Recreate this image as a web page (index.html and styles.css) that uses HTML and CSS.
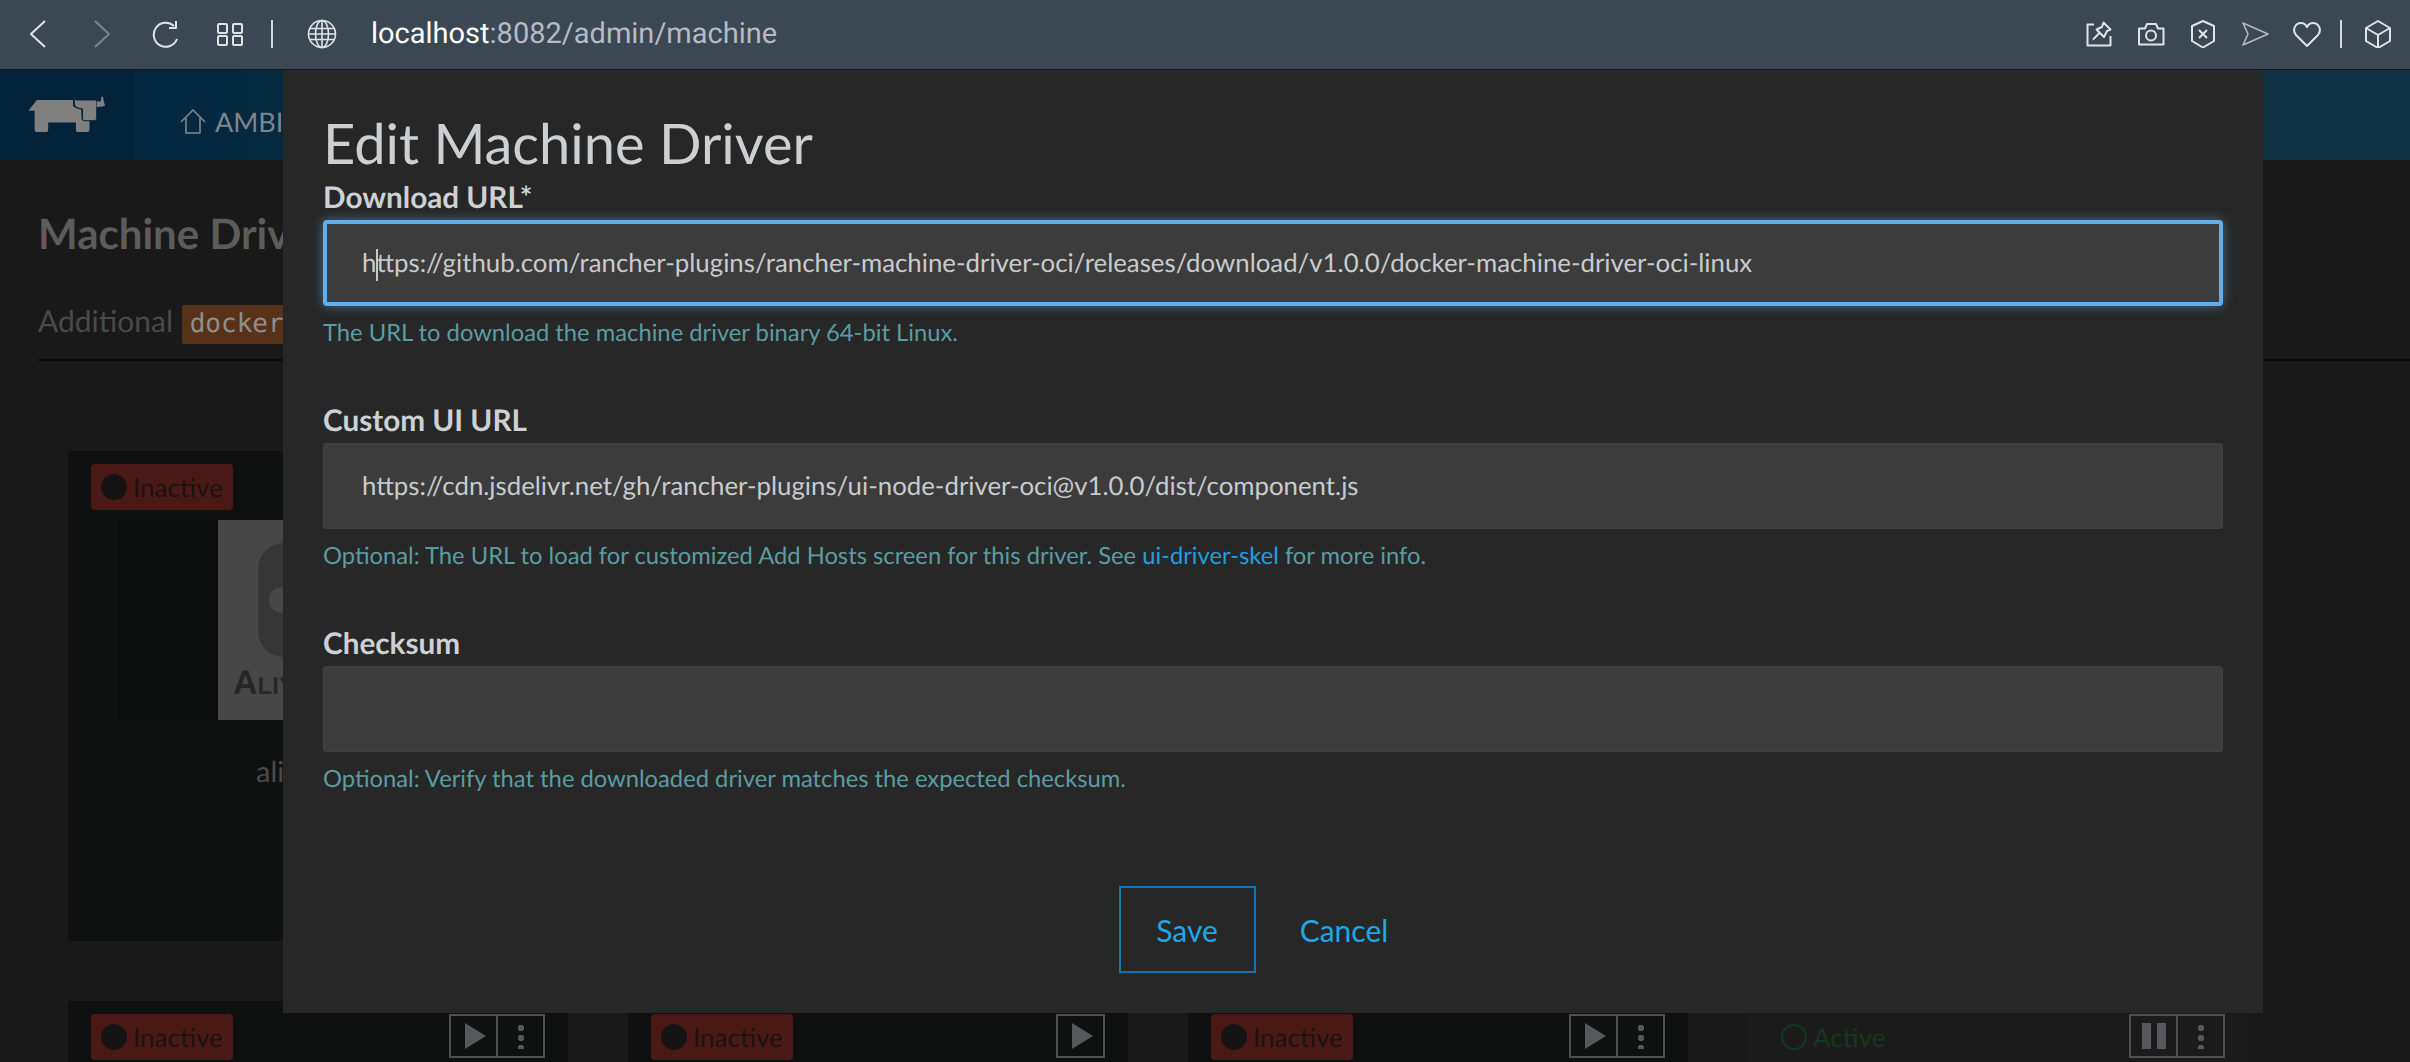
FILE: index.html
```html
<!DOCTYPE html>
<html lang="en">
<head>
    <meta charset="UTF-8">
    <title>Edit Machine Driver</title>
    <link rel="stylesheet" href="styles.css">
</head>
<body>
    <div class="browser-bar">
        <div class="bar-left">
            <svg class="icon" viewBox="0 0 28 28"><path d="M21 1 L7 14 L21 27"/></svg>
            <svg class="icon icon-off" viewBox="0 0 28 28"><path d="M7 1 L21 14 L7 27"/></svg>
            <svg class="icon" viewBox="0 0 28 28"><path d="M25 19 A12 12 0 1 1 22 6"/><path d="M24 1 V8 H17"/></svg>
            <svg class="icon" viewBox="0 0 28 28"><rect x="2" y="4" width="9" height="9" rx="1"/><rect x="17" y="4" width="9" height="9" rx="1"/><rect x="2" y="16" width="9" height="9" rx="1"/><rect x="17" y="16" width="9" height="9" rx="1"/></svg>
        </div>
        <span class="bar-divider"></span>
        <svg class="icon globe" viewBox="0 0 30 30"><circle cx="15" cy="15" r="13.5"/><ellipse cx="15" cy="15" rx="6.5" ry="13.5"/><path d="M3 9.5 H27 M3 20.5 H27 M1.5 15 H28.5 M15 1.5 V28.5"/></svg>
        <div class="url"><span class="url-host">localhost</span>:8082/admin/machine</div>
        <div class="bar-right">
            <svg class="icon" viewBox="0 0 28 28"><path d="M9 4.5 H2.5 V25.5 H25.5 V16"/><path d="M18.5 2.5 L25.5 9.5 L22 11 L19 17 L11.5 9.5 L17 7 Z"/><path d="M14.5 13 L8 19.5"/></svg>
            <svg class="icon" viewBox="0 0 28 28"><path d="M2 8.5 H8 L10 4 H19 L21 8.5 H26.5 V24.5 H2 Z"/><circle cx="14" cy="15.5" r="5"/></svg>
            <svg class="icon" viewBox="0 0 28 28"><path d="M14 1 L25 6 V21 L14 27.5 L3 21 V6 Z"/><path d="M10 10 L18 18 M18 10 L10 18"/></svg>
            <svg class="icon icon-dim" viewBox="0 0 28 28"><path d="M2 3 L27 14 L2 25 L7 14 Z"/></svg>
            <svg class="icon" viewBox="0 0 28 28"><path d="M14 26 L3 15 C-1 10 2 3 8 3 C11 3 13 5 14 7 C15 5 17 3 20 3 C26 3 29 10 25 15 Z"/></svg>
            <span class="bar-divider bar-divider-right"></span>
            <svg class="icon" viewBox="0 0 28 28"><path d="M14 1 L26 8 V21 L14 28 L2 21 V8 Z"/><path d="M2 8 L14 15 L26 8 M14 15 V28"/></svg>
        </div>
    </div>

    <div class="page">
        <div class="top-nav">
            <div class="logo-box">
                <svg class="logo" viewBox="80 80 240 115">
                    <path d="M83 128 L103 103 Q105 95 112 95 L218 95 L218 112 Q220 120 243 124 L244 150 Q244 156 250 158 L268 158 L268 185 Q268 192 260 192 L235 192 Q227 192 227 185 L227 163 L143 163 L143 185 Q143 192 135 192 L110 192 Q102 192 102 185 L102 128 Z"/>
                    <path class="logo-head" d="M222 82 L226 95 L288 95 Q290 95 290 100 L290 150 Q290 158 282 158 L252 158 Q247 158 247 152 L247 122 Q222 120 222 104 Z"/>
                    <path d="M290 100 L298 100 Q304 100 304 85 L309 85 Q310 95 315 112 Q312 116 290 116 Z"/>
                </svg>
            </div>
            <div class="nav-item">
                <svg class="home" viewBox="0 0 26 25"><path d="M1 13 L13 1 L25 13 M6 9 V24 H20 V9"/></svg>
                <span>AMBI</span>
            </div>
        </div>

        <div class="content">
            <h2>Machine Driv</h2>
            <p class="intro">Additional <code>docker</code></p>
            <div class="cards">
                <div class="card">
                    <span class="badge"><i class="dot"></i>Inactive</span>
                    <div class="card-img">
                        <div class="ali-logo">
                            <div class="ali-shape"><i></i></div>
                            <b>Aliy</b>
                        </div>
                    </div>
                    <div class="card-name">ali</div>
                </div>
                <div class="card"></div>
                <div class="card"></div>
                <div class="card"></div>

                <div class="card card-row">
                    <span class="badge"><i class="dot"></i>Inactive</span>
                    <div class="actions">
                        <span class="act"><i class="play"></i></span>
                        <span class="act"><i class="dots"></i></span>
                    </div>
                </div>
                <div class="card card-row">
                    <span class="badge"><i class="dot"></i>Inactive</span>
                    <div class="actions">
                        <span class="act"><i class="play"></i></span>
                    </div>
                </div>
                <div class="card card-row">
                    <span class="badge"><i class="dot"></i>Inactive</span>
                    <div class="actions">
                        <span class="act"><i class="play"></i></span>
                        <span class="act"><i class="dots"></i></span>
                    </div>
                </div>
                <div class="card card-row card-active">
                    <span class="badge badge-active"><i class="ring"></i>Active</span>
                    <div class="actions">
                        <span class="act"><i class="pause"></i></span>
                        <span class="act"><i class="dots"></i></span>
                    </div>
                </div>
            </div>
        </div>

        <div class="modal">
            <h1>Edit Machine Driver</h1>
            <div class="field">
                <div class="label">Download URL*</div>
                <div class="input input-focus">h<span class="caret"></span>ttps://github.com/rancher-plugins/rancher-machine-driver-oci/releases/download/v1.0.0/docker-machine-driver-oci-linux</div>
                <p class="help">The URL to download the machine driver binary 64-bit Linux.</p>
            </div>
            <div class="field">
                <div class="label">Custom UI URL</div>
                <div class="input">https://cdn.jsdelivr.net/gh/rancher-plugins/ui-node-driver-oci@v1.0.0/dist/component.js</div>
                <p class="help">Optional: The URL to load for customized Add Hosts screen for this driver. See <a href="#">ui-driver-skel</a> for more info.</p>
            </div>
            <div class="field">
                <div class="label">Checksum</div>
                <div class="input"></div>
                <p class="help">Optional: Verify that the downloaded driver matches the expected checksum.</p>
            </div>
            <div class="modal-actions">
                <button class="btn btn-save">Save</button>
                <button class="btn btn-cancel">Cancel</button>
            </div>
        </div>
    </div>
</body>
</html>
```

FILE: styles.css
```css
*{
    margin: 0;
    padding: 0;
    box-sizing: border-box;
}
html, body{
    height: 1062px;
    overflow: hidden;
}
body{
    background: #191919;
    font-family: "Lato", "Noto Sans", sans-serif;
    text-rendering: geometricPrecision;
}

/* browser toolbar */
.browser-bar{
    height: 70px;
    background: #3c4754;
    border-bottom: 1px solid #14181c;
    display: flex;
    align-items: center;
    padding: 0 18px 2px 24px;
    color: #dfe3e6;
}
.bar-left, .bar-right{
    display: flex;
    align-items: center;
}
.bar-left{
    gap: 36px;
}
.bar-right{
    gap: 24px;
    margin-left: auto;
}
.icon{
    width: 28px;
    height: 28px;
    fill: none;
    stroke: currentColor;
    stroke-width: 2;
    stroke-linejoin: round;
    flex: none;
}
.icon-off{
    color: #7c858f;
}
.icon-dim{
    color: #b3b9bf;
    stroke-width: 1.6;
}
.bar-divider{
    width: 2px;
    height: 28px;
    background: #d5d8db;
    margin-left: 27px;
}
.bar-divider-right{
    margin: 0 -2px 0 -5px;
}
.globe{
    width: 30px;
    height: 30px;
    margin-left: 34px;
    stroke-width: 1.6;
}
.url{
    margin-left: 34px;
    font-family: "Roboto", sans-serif;
    font-size: 29px;
    color: #b4bbc3;
}
.url-host{
    color: #ffffff;
}

/* page behind the dialog */
.page{
    position: relative;
    height: 992px;
    overflow: hidden;
}
.top-nav{
    height: 90px;
    display: flex;
    background: linear-gradient(90deg, #03283f 0%, #0d3043 100%);
}
.logo-box{
    width: 134px;
    background: #02233a;
    display: flex;
    align-items: center;
    padding-left: 27px;
}
.logo{
    width: 80px;
    height: 38px;
    fill: #808080;
    margin-top: -3px;
}
.logo-head{
    stroke: #02233a;
    stroke-width: 3;
}
.nav-item{
    display: flex;
    align-items: center;
    gap: 9px;
    padding: 12px 0 0 46px;
    font-size: 27px;
    color: #7d868d;
}
.home{
    width: 26px;
    height: 25px;
    fill: none;
    stroke: #7d868d;
    stroke-width: 1.6;
}
.content{
    padding-top: 49px;
}
.content h2{
    margin-left: 38px;
    font-size: 42px;
    line-height: 48px;
    font-weight: 700;
    color: #5c5c5c;
}
.intro{
    margin: 44px 0 0 38px;
    height: 60px;
    border-bottom: 2px solid #0a0a0a;
    font-size: 30px;
    line-height: 40px;
    color: #4a4a4a;
}
.intro code{
    display: inline-block;
    height: 39px;
    padding: 0 8px;
    margin-left: 1px;
    background: #583218;
    border-radius: 2px;
    font-family: "DejaVu Sans Mono", monospace;
    font-size: 26px;
    line-height: 39px;
    color: #8f8f8f;
}
.cards{
    margin: 90px 0 0 68px;
    display: grid;
    grid-template-columns: repeat(4, 500px);
    grid-auto-rows: 490px;
    gap: 60px;
}
.card{
    background: #0f1110;
    padding: 13px 23px;
}
.card-row{
    display: flex;
    justify-content: space-between;
    align-items: flex-start;
}
.card-active{
    background: #1b1b1b;
}
.badge{
    display: inline-flex;
    align-items: center;
    gap: 6px;
    width: 142px;
    height: 46px;
    padding-left: 10px;
    background: #4b1915;
    border-radius: 4px;
    font-size: 26px;
    color: #1a1212;
}
.badge-active{
    background: none;
    color: #12381f;
}
.dot, .ring{
    width: 26px;
    height: 26px;
    border-radius: 50%;
    background: #161313;
}
.ring{
    background: none;
    border: 2px solid #12381f;
}
.actions{
    display: flex;
    border: 2px solid #4e5153;
    height: 44px;
}
.act{
    width: 45px;
    display: flex;
    align-items: center;
    justify-content: center;
}
.act + .act{
    border-left: 2px solid #4e5153;
    width: 47px;
}
.play{
    border-left: 21px solid #55595d;
    border-top: 13px solid transparent;
    border-bottom: 13px solid transparent;
    margin-left: 3px;
}
.pause{
    width: 24px;
    height: 26px;
    border-left: 9px solid #55595d;
    border-right: 9px solid #55595d;
}
.dots{
    width: 6px;
    height: 26px;
    background: radial-gradient(circle, #55595d 3px, transparent 3.5px) center top / 6px 10px repeat-y;
}
.card-img{
    margin: 10px 0 0 27px;
    width: 400px;
    height: 200px;
    background: #0c0e0d;
    display: flex;
    justify-content: center;
}
.ali-logo{
    width: 200px;
    height: 200px;
    background: #474747;
    padding: 23px 0 0 40px;
}
.ali-shape{
    width: 120px;
    height: 114px;
    background: #363636;
    border-radius: 26px;
    display: flex;
    align-items: center;
    padding-left: 11px;
}
.ali-shape i{
    width: 26px;
    height: 26px;
    border-radius: 50%;
    background: #474747;
}
.ali-logo b{
    display: block;
    margin: 9px 0 0 -25px;
    font-family: "Liberation Sans", sans-serif;
    font-variant: small-caps;
    font-size: 34px;
    line-height: 34px;
    color: #262626;
}
.card-name{
    margin: 34px 0 0 165px;
    font-size: 29px;
    color: #4a4a4a;
}

/* dialog */
.modal{
    position: absolute;
    left: 283px;
    top: 0;
    width: 1980px;
    height: 943px;
    background: #272727;
    padding: 42px 40px 0 40px;
}
.modal h1{
    font-size: 56px;
    line-height: 62px;
    font-weight: 400;
    color: #cdd0d2;
    margin-bottom: 7px;
}
.field{
    margin-bottom: 56px;
}
.label{
    font-size: 29.7px;
    line-height: 34px;
    font-weight: 700;
    color: #ced1d3;
    margin-bottom: 5px;
}
.input{
    height: 86px;
    padding-left: 38px;
    background: #3c3c3c;
    border: 1px solid #3d4242;
    border-radius: 3px;
    font-size: 25.8px;
    line-height: 84px;
    color: #c8cbcd;
}
.input-focus{
    border: 4px solid #63ade8;
    border-radius: 4px;
    padding-left: 35px;
    line-height: 78px;
    box-shadow: 0 0 12px rgba(99, 173, 232, 0.5);
}
.caret{
    display: inline-block;
    width: 0;
    height: 32px;
    border-left: 2px solid #c8cbcd;
    margin-right: -2px;
    vertical-align: middle;
}
.help{
    margin-top: 12px;
    font-size: 23.75px;
    line-height: 30px;
    color: #5b9ca1;
}
.help a{
    color: #1e9fe0;
    text-decoration: none;
}
.modal-actions{
    display: flex;
    justify-content: center;
    margin-top: 92px;
}
.btn{
    height: 87px;
    background: none;
    font-family: "Lato", sans-serif;
    font-size: 30px;
    color: #1ea7e8;
    border: 0;
}
.btn-save{
    width: 137px;
    margin-left: 5px;
    border: 2px solid #0f76ab;
}
.btn-cancel{
    width: 177px;
}
```
